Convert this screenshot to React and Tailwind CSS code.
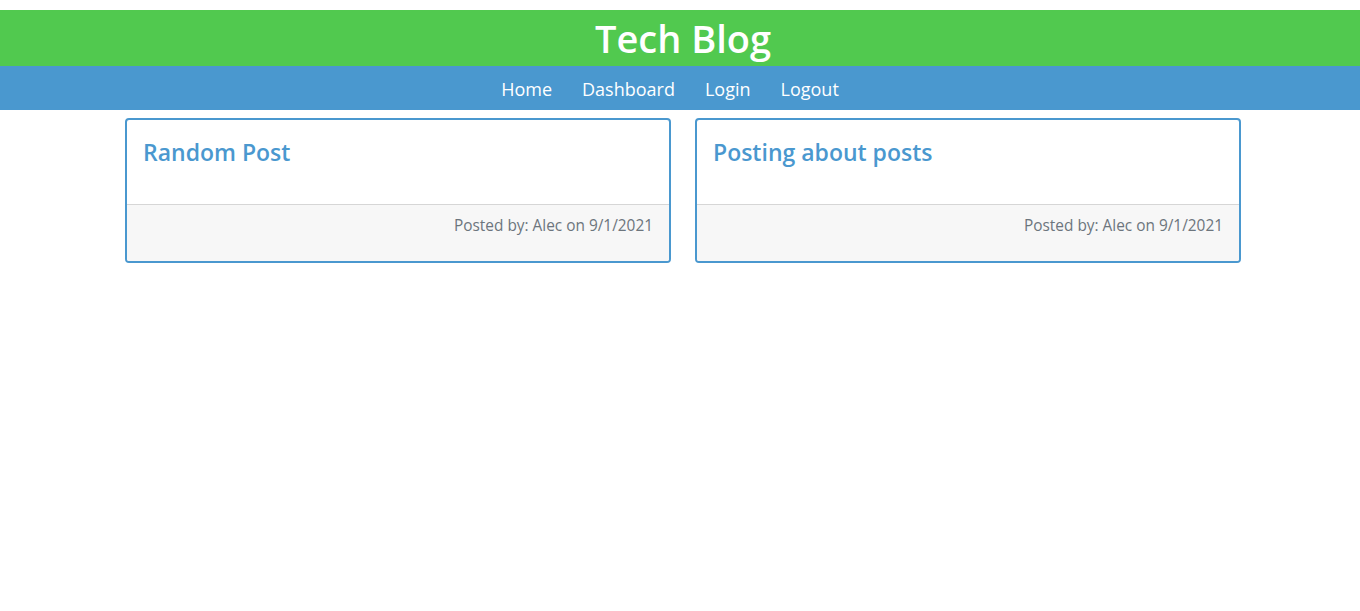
import React from 'react';

const POSTS = [
  { id: 1, title: 'Random Post', author: 'Alec', date: '9/1/2021' },
  { id: 2, title: 'Posting about posts', author: 'Alec', date: '9/1/2021' }
];

const LINKS = ['Home', 'Dashboard', 'Login', 'Logout'];

export default function App() {
  return (
    <div className="min-h-screen bg-white pt-[10px]" style={{ fontFamily: '"Segoe UI", "Open Sans", "Noto Sans", sans-serif' }}>
      <header>
        <div className="h-[56px] bg-[#51c94f] flex items-center justify-center">
          <h1 className="text-[38px] font-semibold text-white leading-none pl-[6px]">Tech Blog</h1>
        </div>
        <nav className="h-[44px] bg-[#4a98cf] flex items-center justify-center gap-[30px] pt-[2px] pr-[20px]">
          {LINKS.map(l => (
            <a key={l} className="text-[18px] text-white leading-none">{l}</a>
          ))}
        </nav>
      </header>

      <main className="w-[1116px] ml-[125px] mt-[8px] flex gap-[24px]">
        {POSTS.map(p => (
          <div key={p.id} className="w-[546px] h-[145px] border-2 border-[#4a98cf] rounded-[4px] flex flex-col overflow-hidden">
            <div className="h-[85px] border-b border-[#d6d6d6] px-[16px] pt-[18px]">
              <h2 className="text-[23px] font-semibold text-[#4a98cf] leading-tight">{p.title}</h2>
            </div>
            <div className="flex-1 bg-[#f7f7f7] px-[16px] pt-[9px] text-right text-[15.4px] text-[#6c757d]">
              Posted by: {p.author} on {p.date}
            </div>
          </div>
        ))}
      </main>
    </div>
  );
}
